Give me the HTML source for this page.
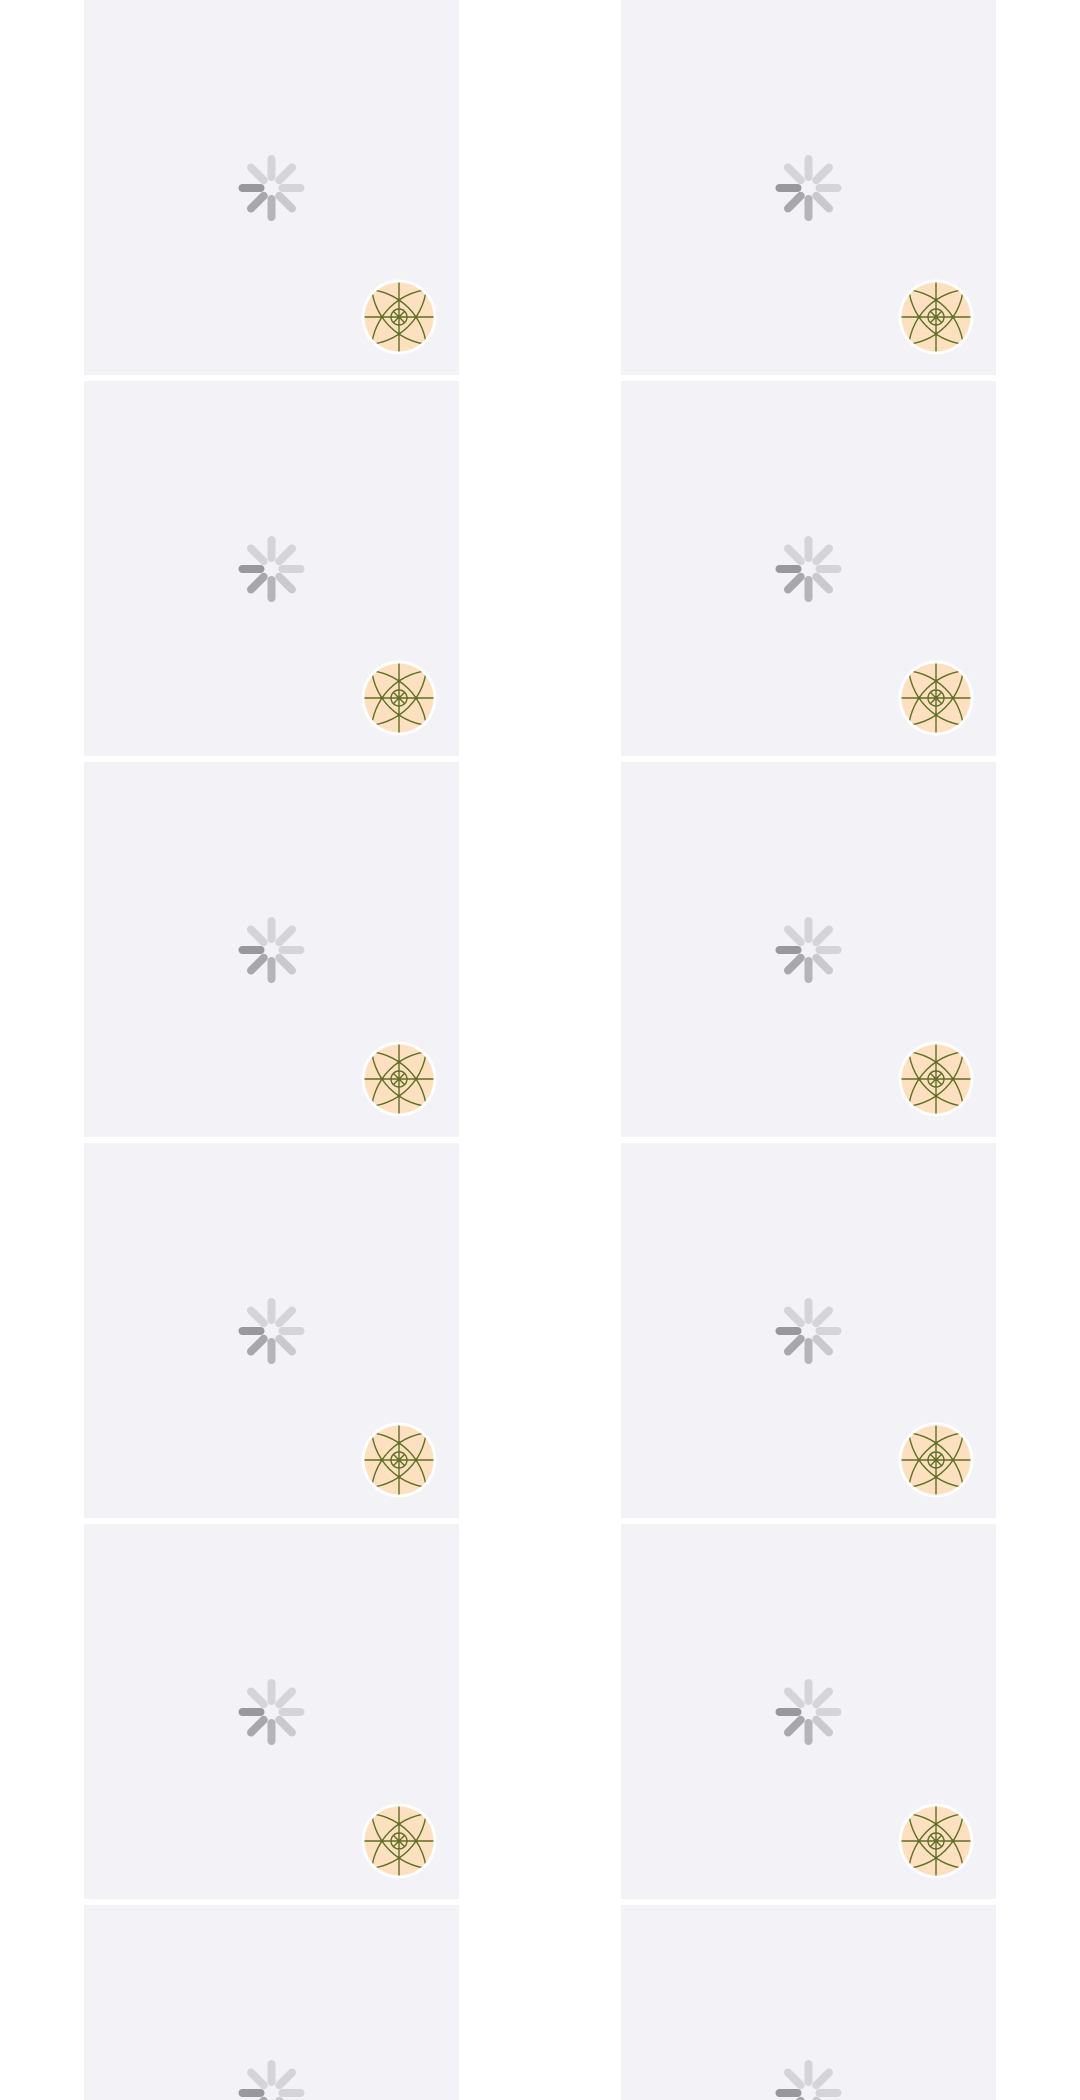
<!DOCTYPE html>
<html><head><meta charset="utf-8">
<style>
html,body{margin:0;padding:0;background:#fff;width:1080px;height:2100px;overflow:hidden}
svg{display:block}
</style></head>
<body>
<svg width="1080" height="2100" viewBox="0 0 1080 2100" xmlns="http://www.w3.org/2000/svg">
<defs>
<clipPath id="cc"><circle cx="0" cy="0" r="34.5"/></clipPath>
<g id="spin" stroke-linecap="round" stroke-width="8" fill="none">
  <line x1="0" y1="-11" x2="0" y2="-29" stroke="#d4d4d9"/>
  <line x1="7.8" y1="-7.8" x2="20.5" y2="-20.5" stroke="#d4d4d9"/>
  <line x1="11" y1="0" x2="29" y2="0" stroke="#d4d4d9"/>
  <line x1="7.8" y1="7.8" x2="20.5" y2="20.5" stroke="#c9c9ce"/>
  <line x1="0" y1="11" x2="0" y2="29" stroke="#b4b4b9"/>
  <line x1="-7.8" y1="7.8" x2="-20.5" y2="20.5" stroke="#a7a7ac"/>
  <line x1="-11" y1="0" x2="-29" y2="0" stroke="#98989d"/>
  <line x1="-7.8" y1="-7.8" x2="-20.5" y2="-20.5" stroke="#d4d4d9"/>
</g>
<g id="av">
  <circle r="37.5" fill="#ffffff"/>
  <circle r="34.5" fill="#fde0c0"/>
  <g clip-path="url(#cc)" stroke="#5e6f25" stroke-width="1.4" fill="none">
    <line x1="0" y1="-36" x2="0" y2="36"/>
    <line x1="-36" y1="0" x2="36" y2="0"/>
    <circle cx="35" cy="35" r="62.7"/>
    <circle cx="-35" cy="35" r="62.7"/>
    <circle cx="35" cy="-35" r="62.7"/>
    <circle cx="-35" cy="-35" r="62.7"/>
    <circle r="8"/>
    <line x1="-5.6" y1="-5.6" x2="5.6" y2="5.6"/>
    <line x1="-5.6" y1="5.6" x2="5.6" y2="-5.6"/>
  </g>
  <g fill="#5e6f25">
    <circle cx="0" cy="-17" r="1.6"/><circle cx="0" cy="17" r="1.6"/>
    <circle cx="-17" cy="0" r="1.6"/><circle cx="17" cy="0" r="1.6"/>
  </g>
</g>
<g id="tile">
  <rect x="0" y="0" width="375" height="375" fill="#f2f2f7"/>
  <use href="#spin" transform="translate(187.5,188)"/>
  <use href="#av" transform="translate(315,317)"/>
</g>
</defs>
<use href="#tile" x="84" y="0"/><use href="#tile" x="621" y="0"/>
<use href="#tile" x="84" y="381"/><use href="#tile" x="621" y="381"/>
<use href="#tile" x="84" y="762"/><use href="#tile" x="621" y="762"/>
<use href="#tile" x="84" y="1143"/><use href="#tile" x="621" y="1143"/>
<use href="#tile" x="84" y="1524"/><use href="#tile" x="621" y="1524"/>
<use href="#tile" x="84" y="1905"/><use href="#tile" x="621" y="1905"/>
</svg>
</body></html>
